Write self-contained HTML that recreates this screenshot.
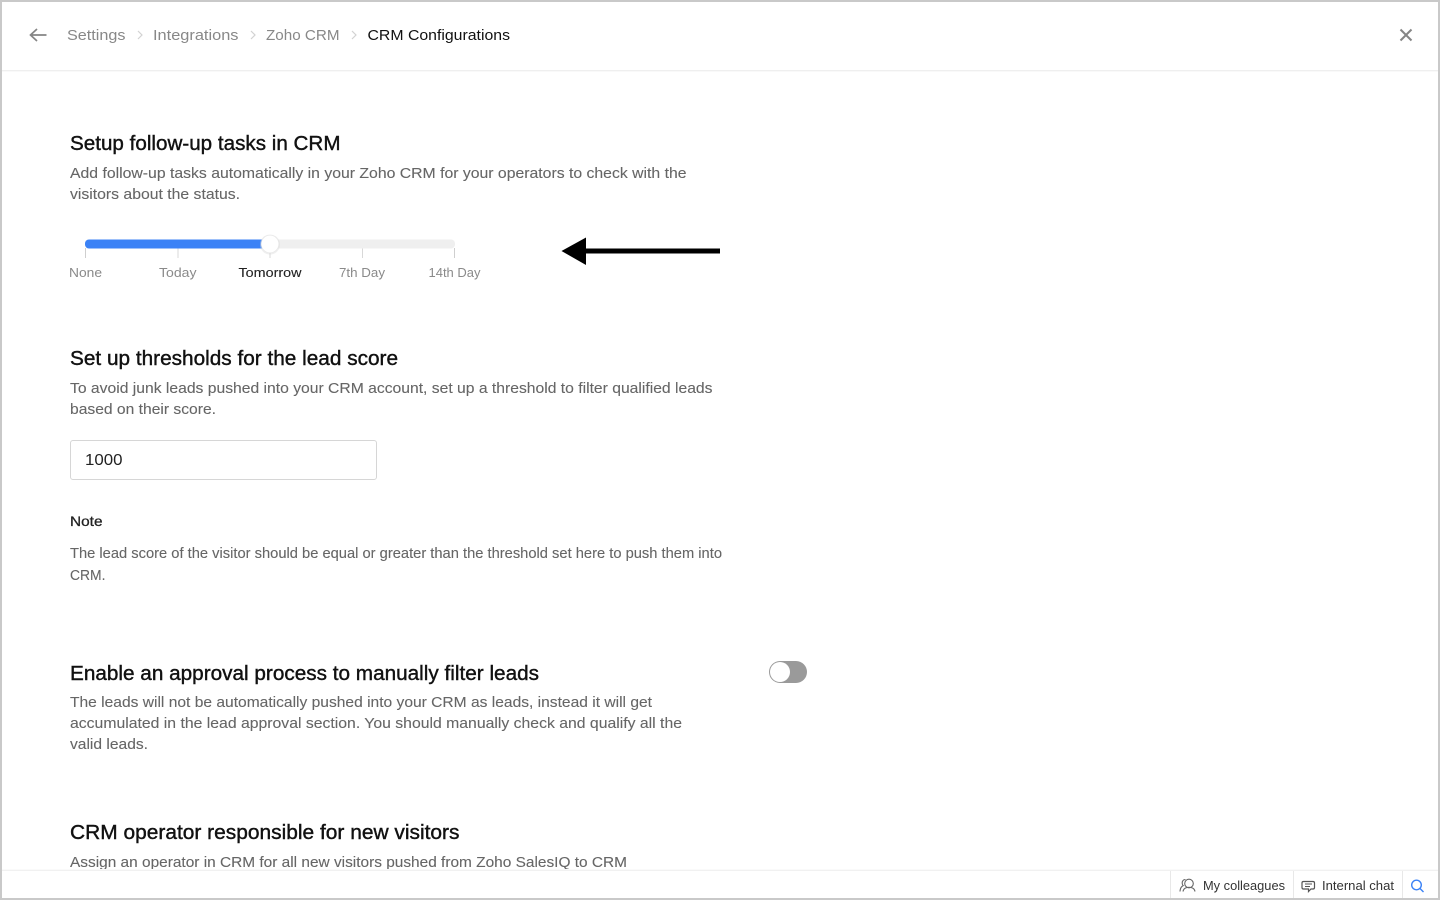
<!DOCTYPE html>
<html lang="en">
<head>
<meta charset="utf-8">
<title>CRM Configurations</title>
<style>
html,body{margin:0;padding:0;width:1440px;height:900px;overflow:hidden;background:#fff}
svg{display:block;position:absolute;left:0;top:0}
text{font-family:"Liberation Sans",sans-serif}
.h{font-size:20.5px;fill:#111;font-weight:400;stroke:#111;stroke-width:.4px}
.p{font-size:15px;fill:#666;stroke:#666;stroke-width:.1px}
.c{font-size:15px;fill:#888}
.t{font-size:13px;fill:#8a8a8a}
.f{font-size:13px;fill:#222;stroke:#222;stroke-width:.1px}
</style>
</head>
<body>
<svg width="1440" height="900" viewBox="0 0 1440 900" xmlns="http://www.w3.org/2000/svg">
<rect width="1440" height="900" fill="#fff"/>
<!-- header -->
<rect x="0" y="70" width="1440" height="1" fill="#efefef"/>
<rect x="0" y="71" width="1440" height="1" fill="#f9f9f9"/>
<path d="M46.500 35H31M37 29l-6.500 6 6.500 6" fill="none" stroke="#858585" stroke-width="1.700"/>
<text class="c" x="67" y="40" textLength="58.500" lengthAdjust="spacingAndGlyphs">Settings</text>
<path d="M138 31l4 4-4 4" fill="none" stroke="#d2d2d2" stroke-width="1.200"/>
<text class="c" x="153" y="40" textLength="85.500" lengthAdjust="spacingAndGlyphs">Integrations</text>
<path d="M251 31l4 4-4 4" fill="none" stroke="#d2d2d2" stroke-width="1.200"/>
<text class="c" x="266" y="40" textLength="73.500" lengthAdjust="spacingAndGlyphs">Zoho CRM</text>
<path d="M352 31l4 4-4 4" fill="none" stroke="#d2d2d2" stroke-width="1.200"/>
<text x="367.500" y="40" font-size="15" fill="#111" textLength="142.500" lengthAdjust="spacingAndGlyphs">CRM Configurations</text>
<path d="M1400.500 29.500l11 11M1411.500 29.500l-11 11" fill="none" stroke="#858585" stroke-width="2"/>

<!-- section 1 -->
<text class="h" x="70" y="150" textLength="270.500" lengthAdjust="spacingAndGlyphs">Setup follow-up tasks in CRM</text>
<text class="p" x="70" y="178" textLength="616.500" lengthAdjust="spacingAndGlyphs">Add follow-up tasks automatically in your Zoho CRM for your operators to check with the</text>
<text class="p" x="70" y="199" textLength="170" lengthAdjust="spacingAndGlyphs">visitors about the status.</text>

<!-- slider -->
<rect x="85" y="248" width="1" height="10" fill="#cfcfcf"/>
<rect x="177.500" y="248" width="1" height="10" fill="#d8d8d8"/>
<rect x="269.500" y="248" width="1" height="10" fill="#d8d8d8"/>
<rect x="362" y="248" width="1" height="10" fill="#d8d8d8"/>
<rect x="454" y="248" width="1" height="10" fill="#cfcfcf"/>
<rect x="85" y="239.500" width="370" height="9" rx="4" fill="#efefef"/>
<rect x="85" y="239.500" width="185" height="9" rx="4" fill="#3b82f6"/>
<circle cx="270" cy="244.500" r="10" fill="#dcdcdc" opacity=".45"/>
<circle cx="270" cy="244" r="9" fill="#e6e6e6"/>
<circle cx="270" cy="244" r="8.500" fill="#fff"/>
<text class="t" x="69" y="277" textLength="33" lengthAdjust="spacingAndGlyphs">None</text>
<text class="t" x="159" y="277" textLength="37.500" lengthAdjust="spacingAndGlyphs">Today</text>
<text class="f" x="238.500" y="277" textLength="63" lengthAdjust="spacingAndGlyphs">Tomorrow</text>
<text class="t" x="339" y="277" textLength="46" lengthAdjust="spacingAndGlyphs">7th Day</text>
<text class="t" x="428.500" y="277" textLength="52" lengthAdjust="spacingAndGlyphs">14th Day</text>

<!-- big arrow -->
<rect x="585" y="248.500" width="135" height="5" fill="#000"/>
<path d="M561.500 251L586 237.500V265Z" fill="#000"/>

<!-- section 2 -->
<text class="h" x="70" y="365" textLength="328" lengthAdjust="spacingAndGlyphs">Set up thresholds for the lead score</text>
<text class="p" x="70" y="393" textLength="642.500" lengthAdjust="spacingAndGlyphs">To avoid junk leads pushed into your CRM account, set up a threshold to filter qualified leads</text>
<text class="p" x="70" y="414" textLength="146" lengthAdjust="spacingAndGlyphs">based on their score.</text>
<rect x="70.500" y="440.500" width="306" height="39" rx="2.500" fill="#fff" stroke="#d6d6d6"/>
<text x="85" y="465" font-size="16" fill="#222" textLength="37.500" lengthAdjust="spacingAndGlyphs">1000</text>
<text x="70" y="526" font-size="14" fill="#222" stroke="#222" stroke-width=".3" textLength="32.500" lengthAdjust="spacingAndGlyphs">Note</text>
<text class="p" x="70" y="558" style="font-size:14.500px" textLength="652" lengthAdjust="spacingAndGlyphs">The lead score of the visitor should be equal or greater than the threshold set here to push them into</text>
<text class="p" x="70" y="580" style="font-size:14.500px" textLength="35.500" lengthAdjust="spacingAndGlyphs">CRM.</text>

<!-- section 3 -->
<text class="h" x="70" y="680" textLength="469" lengthAdjust="spacingAndGlyphs">Enable an approval process to manually filter leads</text>
<text class="p" x="70" y="707" textLength="582" lengthAdjust="spacingAndGlyphs">The leads will not be automatically pushed into your CRM as leads, instead it will get</text>
<text class="p" x="70" y="728" textLength="612" lengthAdjust="spacingAndGlyphs">accumulated in the lead approval section. You should manually check and qualify all the</text>
<text class="p" x="70" y="749" textLength="78" lengthAdjust="spacingAndGlyphs">valid leads.</text>
<rect x="769" y="661" width="38" height="22" rx="11" fill="#9a9a9a"/>
<circle cx="780" cy="672" r="10" fill="#fff"/>

<!-- section 4 -->
<text class="h" x="70" y="839" textLength="389.500" lengthAdjust="spacingAndGlyphs">CRM operator responsible for new visitors</text>
<text class="p" x="70" y="867" textLength="557" lengthAdjust="spacingAndGlyphs">Assign an operator in CRM for all new visitors pushed from Zoho SalesIQ to CRM</text>

<!-- footer -->
<rect x="0" y="870" width="1440" height="30" fill="#fff"/>
<rect x="0" y="869" width="1440" height="1" fill="#fafafa"/>
<rect x="0" y="870" width="1440" height="1" fill="#f1f1f1"/>
<rect x="1170" y="871" width="1" height="27" fill="#e8e8e8"/>
<rect x="1293" y="871" width="1" height="27" fill="#e8e8e8"/>
<rect x="1402" y="871" width="1" height="27" fill="#e8e8e8"/>
<g fill="none" stroke="#666" stroke-width="1.100">
  <circle cx="1189" cy="883.500" r="4.300"/>
  <path d="M1183 891.500c.5-3.200 2.600-4.200 6-4.200s5.500 1 6 4.200"/>
  <path d="M1185.500 879.500c-2-.1-3.400 1.500-3.300 3.600 0 1 .4 1.900 1 2.500-1.800.8-3 2.700-3.200 5.900"/>
</g>
<text x="1203" y="890" font-size="13" fill="#333" textLength="82" lengthAdjust="spacingAndGlyphs">My colleagues</text>
<g fill="none" stroke="#555" stroke-width="1.200">
  <path d="M1303.500 881.500h9.500q1.500 0 1.500 1.500v4.500q0 1.500-1.500 1.500h-2l-2.500 2.500v-2.500h-5q-1.500 0-1.500-1.500V883q0-1.500 1.500-1.500z"/>
  <path d="M1305 884h7M1305 886.500h5" stroke-width="1"/>
</g>
<text x="1322" y="890" font-size="13" fill="#333" textLength="72" lengthAdjust="spacingAndGlyphs">Internal chat</text>
<g fill="none" stroke="#3b82f6" stroke-width="1.400">
  <circle cx="1416.500" cy="885" r="4.800"/>
  <path d="M1420 888.500l3.500 3.500"/>
</g>

<!-- frame -->
<rect x="1" y="1" width="1438" height="898" fill="none" stroke="#c9c9c9" stroke-width="2"/>
</svg>
</body>
</html>
